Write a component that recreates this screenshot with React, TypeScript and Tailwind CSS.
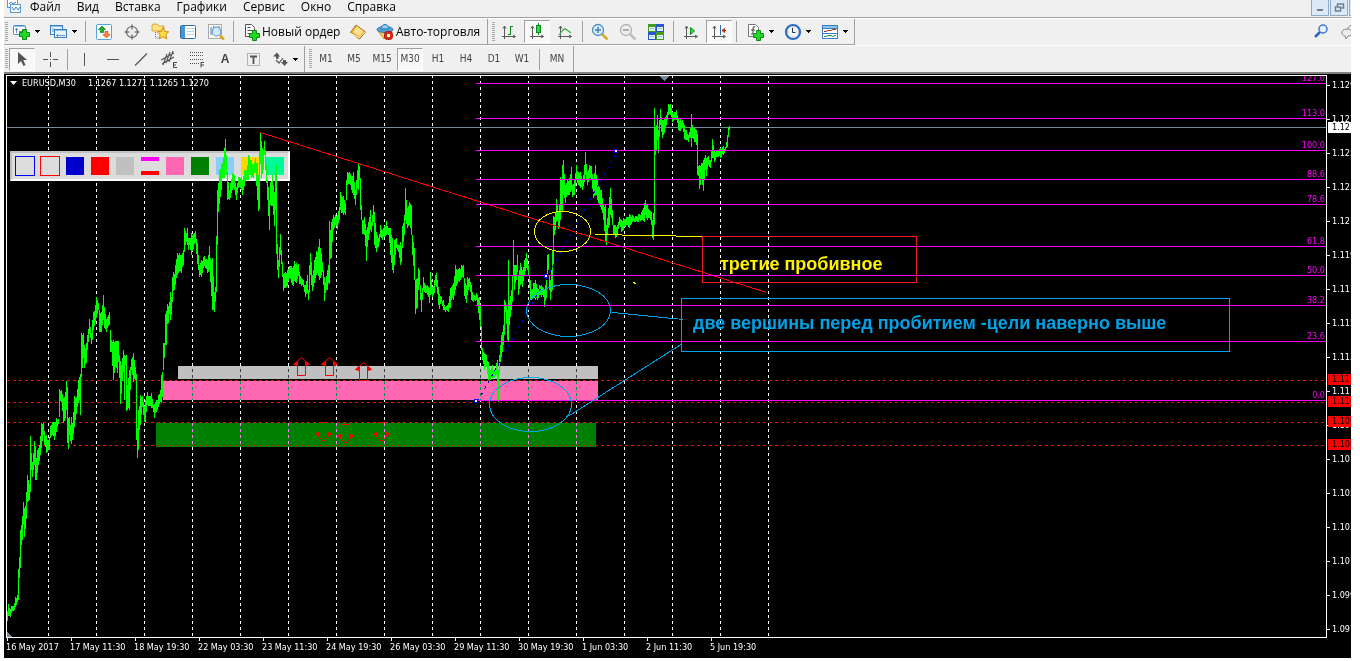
import React from 'react';

type IconProps = { children: React.ReactNode; w?: number };

const Icon: React.FC<IconProps> = ({ children, w = 18 }) => (
    <svg width={w} height="18" viewBox={`0 0 ${w} 18`} className="shrink-0" aria-hidden="true">
        {children}
    </svg>
);

const Caret: React.FC = () => (
    <svg width="5" height="3" viewBox="0 0 5 3" className="shrink-0" shapeRendering="crispEdges" aria-hidden="true">
        <path d="M0 0h5v1h-5zM1 1h3v1h-3zM2 2h1v1h-1z" fill="#000" />
    </svg>
);

const Plus: React.FC<{ x: number; y: number }> = ({ x, y }) => (
    <path
        transform={`translate(${x} ${y})`}
        d="M3.500 .5h4v3h3v4h-3v3h-4v-3h-3v-4h3z"
        fill="#22d822"
        stroke="#0a8a14"
    />
);

const Axes: React.FC = () => (
    <path d="M4.500 3v13M2 13.500h13M3 5.500l1.500-2.500 1.500 2.500M13 12l2.500 1.500-2.500 1.500" fill="none" stroke="#5a5a5a" />
);

const icons: Record<string, React.ReactNode> = {
    newChart: (
        <Icon>
            <rect x=".5" y="2.500" width="12" height="9" rx="1" fill="#fff" stroke="#4a8cc8" />
            <path d="M1 3.500h11" stroke="#8fc0ea" />
            <path d="M3.500 5v5M2 6.500h3M6 8.500h4" stroke="#5f88a8" fill="none" />
            <Plus x={6} y={6} />
        </Icon>
    ),
    profiles: (
        <Icon>
            <rect x=".5" y="2.500" width="12" height="9" fill="#e8f3fc" stroke="#3a7ebf" />
            <path d="M1 3.500h11" stroke="#8fc0ea" />
            <rect x="4.500" y="6.500" width="12" height="8" fill="#e8f3fc" stroke="#3a7ebf" />
            <path d="M5 7.500h11" stroke="#8fc0ea" />
            <path d="M6 12.500h9M7.500 11v3M3 5v4" stroke="#6f98bc" />
        </Icon>
    ),
    market: (
        <Icon>
            <rect x="1.500" y="1.500" width="15" height="15" rx="1" fill="#f6fafd" stroke="#55a4dc" />
            <path d="M7 3l3.500 3.500h-2v3h-3v-3h-2z" fill="#1cae2c" stroke="#0a7d12" strokeWidth=".7" />
            <path d="M11.500 15l3.500-3.500h-2v-3h-3v3h-2z" fill="#ff8a43" stroke="#d0420d" strokeWidth=".7" />
        </Icon>
    ),
    target: (
        <Icon>
            <circle cx="9" cy="9" r="5.500" fill="none" stroke="#666" strokeWidth="1.200" />
            <path d="M9 1.500v5M9 11.500v5M1.500 9h5M11.500 9h5" stroke="#555" strokeWidth="1.200" />
        </Icon>
    ),
    navigator: (
        <Icon>
            <path d="M1 8V2l1-1h4l2 2h5v5z" fill="#ffe083" stroke="#d9a83c" />
            <path d="M4.500 9v6h3" stroke="#777" strokeDasharray="1 1" fill="none" />
            <path d="M12 4.500l1.800 4 4 .3-3 2.900 1 4.300-3.800-2.300-3.800 2.300 1-4.300-3-2.900 4-.3z" fill="#ffdc40" stroke="#cf8c11" />
        </Icon>
    ),
    terminal: (
        <Icon>
            <rect x="1.500" y="2.500" width="15" height="13" rx="1" fill="#fff" stroke="#2e6ca8" />
            <rect x="2" y="3" width="4" height="12" fill="#4a94d4" />
            <path d="M8 5.500h7M8 8.500h7M8 11.500h7" stroke="#b9d1e8" />
        </Icon>
    ),
    tester: (
        <Icon>
            <rect x="1.500" y="1.500" width="13" height="14" fill="#f7f7f7" stroke="#aaa" />
            <path d="M4 4v8M6.500 3v6M12 3v6" stroke="#5b88b0" />
            <circle cx="9.500" cy="8.500" r="4.500" fill="#cbe6f9" fillOpacity=".8" stroke="#5a98cc" strokeWidth="1.200" />
            <path d="M13 12.500l4 4" stroke="#d9a520" strokeWidth="2.500" />
        </Icon>
    ),
    order: (
        <Icon>
            <path d="M2.500 1.500h6l3 3v9h-9z" fill="#fff" stroke="#555" />
            <path d="M4.500 4.500h3M4.500 7.500h5M4.500 10.500h4" stroke="#555" />
            <Plus x={6} y={7} />
        </Icon>
    ),
    book: (
        <Icon>
            <path d="M1.500 9.500L7 2l9.500 7-6 7z" fill="#e9b138" stroke="#a86d0c" />
            <path d="M4 9l4-5.500 6.500 4.700-4.500 4.800z" fill="#ffe391" />
            <path d="M2 10.500l8 4 6-5.500" fill="none" stroke="#fff1c4" />
        </Icon>
    ),
    auto: (
        <Icon>
            <path d="M2 8l6 8 8-6-1-4z" fill="#f8cf52" stroke="#c89520" />
            <ellipse cx="9" cy="6.500" rx="8" ry="3" fill="#4fa3da" stroke="#2a75ac" />
            <path d="M5 6c0-6 8-6 8 0z" fill="#8bcdf2" stroke="#2a75ac" />
            <rect x="8.500" y="8.500" width="8" height="8" rx="3" fill="#dc2d16" stroke="#a31208" />
            <rect x="11" y="11" width="3" height="3" fill="#fff" />
        </Icon>
    ),
    bars: (
        <Icon>
            <Axes />
            <path d="M10.500 3v9M8 11.500h3M10 3.500h3" stroke="#0a8a1a" />
        </Icon>
    ),
    candles: (
        <Icon>
            <Axes />
            <path d="M10.500 0v12" stroke="#0a8a1a" />
            <rect x="8.500" y="2.500" width="4" height="7" fill="#32d840" stroke="#0a8a1a" />
        </Icon>
    ),
    line: (
        <Icon>
            <Axes />
            <path d="M3 12l4-5q2-2 4 0l4 3" fill="none" stroke="#3fac4a" strokeWidth="1.200" />
        </Icon>
    ),
    zoomIn: (
        <Icon>
            <path d="M11 11l5.500 5.500" stroke="#d9ac2e" strokeWidth="2.700" />
            <circle cx="7" cy="7" r="5.500" fill="#d9effc" stroke="#4a8cc8" strokeWidth="1.300" />
            <path d="M4 7h6M7 4v6" stroke="#3f7cb5" strokeWidth="1.500" />
        </Icon>
    ),
    zoomOut: (
        <Icon>
            <path d="M11 11l5.500 5.500" stroke="#c0c0c0" strokeWidth="2.700" />
            <circle cx="7" cy="7" r="5.500" fill="#eee" stroke="#b0b0b0" strokeWidth="1.300" />
            <path d="M4 7h6" stroke="#999" strokeWidth="1.500" />
        </Icon>
    ),
    tile: (
        <Icon>
            <path d="M1 1h8v8h-8zM9 9h8v8h-8z" fill="#3f9d1f" />
            <path d="M9 1h8v8h-8zM1 9h8v8h-8z" fill="#2458cc" />
            <path d="M2 4h6v4h-6zM10 4h6v4h-6zM2 12h6v4h-6zM10 12h6v4h-6z" fill="#e3eefa" />
            <path d="M3 5.500h4M11 5.500h4M3 13.500h4M11 13.500h4" stroke="#9fc0e0" />
        </Icon>
    ),
    scroll: (
        <Icon>
            <Axes />
            <path d="M8.500 4.500l4 3.500-4 3.500z" fill="#3bd34a" stroke="#0a8a1a" />
        </Icon>
    ),
    shift: (
        <Icon>
            <Axes />
            <path d="M10.500 2v10" stroke="#2c6fb0" />
            <path d="M16 7.500h-3M14.500 5.500l-2.500 2 2.500 2z" stroke="#b3330e" fill="#b3330e" />
        </Icon>
    ),
    indicator: (
        <Icon>
            <path d="M1.500 1.500h7l3 3v9h-10z" fill="#fff" stroke="#777" />
            <path d="M8 4q-2-1-2 1v5q0 2-2 1M4 7h4" fill="none" stroke="#444" />
            <Plus x={6} y={7} />
        </Icon>
    ),
    clock: (
        <Icon>
            <circle cx="9" cy="9" r="7" fill="#eef5fc" stroke="#2a6cc4" strokeWidth="2.200" />
            <path d="M8.500 5v4.500h3" stroke="#333" fill="none" />
            <path d="M9 3.500v1M9 13.500v1M3.500 9h1M13.500 9h1" stroke="#888" />
        </Icon>
    ),
    template: (
        <Icon>
            <rect x="1.500" y="2.500" width="15" height="13" fill="#fff" stroke="#3a7ebf" />
            <path d="M2 4h14" stroke="#8cc4f0" strokeWidth="2" />
            <path d="M2 5.500h14M2 10.500h14" stroke="#3a7ebf" />
            <path d="M3 8.500h2l2-1h3l2-1h3" stroke="#a33316" fill="none" />
            <path d="M3 13.500h2l2-1h3l2 1 2-1h1" stroke="#2c8a35" fill="none" />
        </Icon>
    ),
    cursor: (
        <Icon>
            <path d="M5 2v12l3-3 2.500 5 2-1-2.300-5h4z" fill="#555" />
        </Icon>
    ),
    cross: (
        <Icon>
            <path d="M9.500 2v5M9.500 12v5M2 9.500h5M12 9.500h5M9 9.500h1" stroke="#555" />
        </Icon>
    ),
    vline: <Icon><path d="M8.500 3v13" stroke="#555" /></Icon>,
    hline: <Icon><path d="M3 9.500h12" stroke="#555" /></Icon>,
    trend: <Icon><path d="M3 15.500L15 3.500" stroke="#555" strokeWidth="1.200" /></Icon>,
    channel: (
        <Icon>
            <path d="M1 10L14 3M2 14L14 7M3 15L7 4M6 13L10 2M9 12L13 1" stroke="#555" strokeWidth="1.200" />
            <path d="M17 12.500h-3.500v5h3.500M13 15h3" stroke="#444" fill="none" />
        </Icon>
    ),
    fibo: (
        <Icon>
            <path d="M2 2.500h14M2 5.500h14M2 9.500h14M2 13.500h9" stroke="#555" strokeDasharray="1 1" />
            <path d="M16 12.500h-3v5M13 15h3" stroke="#444" fill="none" />
        </Icon>
    ),
    label: (
        <Icon>
            <rect x="3.500" y="3.500" width="12" height="12" fill="none" stroke="#777" strokeDasharray="1 1" />
            <path d="M6 6.500h7M9.500 6v8" stroke="#555" strokeWidth="1.800" />
        </Icon>
    ),
    arrows: (
        <Icon>
            <path d="M2 6.500l4-4 3 4zM4.500 6h3v3h-2zM10 12h7l-3.500 4zM12 10h3v3h-3z" fill="#555" />
            <path d="M5 10l3 3 4-5" stroke="#555" fill="none" strokeWidth="1.200" />
        </Icon>
    ),
};

const Grip: React.FC = () => (
    <div className="ml-px w-[3px] h-5 shrink-0 bg-[repeating-linear-gradient(to_bottom,#a8a8a8_0px,#a8a8a8_1px,#f0f0f0_1px,#f0f0f0_2px)]"></div>
);

const Sep: React.FC = () => <div className="w-px h-[21px] mx-[3px] shrink-0 bg-[#a0a0a0]"></div>;

const Tool: React.FC<{ icon: string; name: string; pressed?: boolean }> = ({ icon, name, pressed }) => (
    <button
        aria-label={name}
        className={
            pressed
                ? 'flex items-center justify-center w-[26px] mx-px h-[23px] shrink-0 border border-t-[#a0a0a0] border-l-[#a0a0a0] border-r-white border-b-white bg-[#f8f8f8]'
                : 'flex items-center justify-center w-7 h-[23px] shrink-0'
        }
    >
        {icons[icon]}
    </button>
);

const DropTool: React.FC<{ icon: string; name: string }> = ({ icon, name }) => (
    <button aria-label={name} className="flex items-center gap-1 pl-[2px] w-[37px] h-[23px] shrink-0">
        {icons[icon]}
        <Caret />
    </button>
);

const menu = ['Файл', 'Вид', 'Вставка', 'Графики', 'Сервис', 'Окно', 'Справка'];
const frames = ['M1', 'M5', 'M15', 'M30', 'H1', 'H4', 'D1', 'W1'];

const dates = [
    '16 May 2017', '17 May 11:30', '18 May 19:30', '22 May 03:30', '23 May 11:30', '24 May 19:30',
    '26 May 03:30', '29 May 11:30', '30 May 19:30', '1 Jun 03:30', '2 Jun 11:30', '5 Jun 19:30',
];

const prices = [
    '1.129', '1.127', '1.125', '1.123', '1.121', '1.119', '1.117', '1.115', '1.113',
    '1.111', '1.109', '1.107', '1.105', '1.103', '1.101', '1.099', '1.097',
];

const fibs: [number, string][] = [
    [83, '127.0'], [118, '113.0'], [150, '100.0'], [179, '88.6'], [204, '78.6'],
    [246, '61.8'], [275, '50.0'], [305, '38.2'], [341, '23.6'], [400, '0.0'],
];

const levels = [380, 402, 422, 445];

// x, high, low
const quotes: number[][] = [
    [7,611,617],[8,611,621],[9,604,616],[11,609,617],[12,606,613],[15,603,610],[16,597,607],[18,595,602],[19,569,600],
    [20,557,578],[21,530,568],[22,525,545],[23,516,540],[24,502,525],[25,508,537],[26,506,529],[27,492,519],[28,475,502],
    [29,480,501],[30,484,500],[31,436,492],[32,453,470],[33,462,477],[35,441,465],[36,446,480],[37,458,480],[38,450,473],
    [40,445,461],[42,423,448],[44,423,435],[45,431,445],[46,436,447],[47,435,453],[48,440,452],[50,437,450],[51,426,438],
    [53,422,435],[55,422,440],[57,418,432],[59,419,424],[60,389,417],[61,391,401],[62,390,402],[64,398,423],[66,392,418],
    [67,381,410],[68,387,443],[69,418,449],[70,417,435],[71,425,441],[72,417,444],[73,423,440],[75,396,427],[77,397,414],
    [79,380,403],[80,377,400],[81,374,415],[82,333,377],[84,333,358],[85,345,368],[86,348,364],[87,343,363],[88,335,350],
    [90,319,334],[92,333,344],[93,320,340],[94,312,330],[96,305,322],[97,297,318],[98,300,314],[99,303,310],[100,310,332],
    [102,312,332],[104,295,320],[105,307,328],[107,319,332],[110,312,325],[111,330,352],[112,340,352],[114,340,380],
    [116,341,367],[118,341,373],[119,341,362],[120,355,378],[121,361,404],[122,365,394],[124,350,372],[125,355,400],
    [126,356,365],[127,355,411],[128,385,410],[130,370,410],[132,359,370],[134,353,382],[136,367,380],[137,374,440],
    [138,428,458],[139,410,450],[140,406,430],[141,395,425],[143,396,407],[144,402,415],[145,406,422],[146,400,422],
    [148,392,405],[150,396,406],[152,393,408],[154,405,412],[155,404,418],[157,400,412],[159,395,407],[161,390,402],
    [162,375,403],[163,372,397],[164,343,370],[165,343,358],[166,314,345],[167,311,345],[168,304,324],[169,306,323],
    [170,302,314],[171,292,320],[172,297,315],[173,277,302],[174,272,291],[175,274,290],[176,265,285],[178,253,275],
    [180,253,271],[182,255,273],[184,250,265],[185,228,252],[187,233,242],[188,228,245],[189,238,250],[190,238,245],
    [192,233,255],[194,234,249],[196,231,243],[198,243,264],[200,265,277],[202,260,277],[205,256,266],[208,260,273],
    [210,246,270],[211,258,282],[213,258,310],[215,292,312],[216,287,302],[217,236,292],[218,190,245],[219,183,212],
    [220,170,204],[222,164,190],[223,163,178],[225,148,178],[226,139,165],[227,155,175],[228,172,200],[230,190,200],
    [231,183,198],[233,173,190],[235,175,190],[237,187,200],[239,177,188],[242,177,190],[243,180,195],[245,170,186],
    [247,170,180],[249,155,180],[250,156,172],[252,160,178],[254,165,178],[256,158,172],[258,163,200],[259,175,211],
    [260,151,209],[261,133,164],[262,141,178],[264,150,170],[265,141,155],[266,150,170],[268,180,200],[269,187,216],
    [270,200,230],[271,182,205],[273,175,206],[275,192,226],[276,165,210],[277,165,254],[278,244,270],[279,260,278],
    [280,247,267],[281,234,255],[282,250,264],[283,262,277],[284,274,291],[286,272,288],[288,270,286],[290,266,278],
    [292,266,283],[294,266,286],[295,261,281],[297,263,283],[299,264,276],[300,272,284],[302,278,286],[304,280,287],
    [306,285,297],[308,275,293],[309,290,300],[310,265,292],[311,253,275],[312,262,285],[313,275,291],[315,260,283],
    [317,251,275],[318,252,273],[320,239,280],[321,248,278],[322,253,275],[323,262,272],[325,277,301],[326,282,293],
    [328,270,290],[329,265,283],[330,221,284],[331,230,259],[332,222,258],[334,215,230],[336,215,225],[338,215,229],
    [340,207,220],[341,192,210],[342,195,213],[344,196,215],[346,203,215],[347,180,200],[348,172,185],[350,172,184],
    [352,176,190],[354,172,195],[356,190,205],[357,180,195],[358,170,188],[359,163,190],[360,166,180],[361,178,210],
    [362,205,220],[363,220,234],[365,217,235],[367,230,261],[368,227,247],[369,222,240],[371,210,230],[372,222,232],
    [374,205,222],[375,212,245],[377,232,252],[379,238,247],[381,225,237],[383,230,240],[385,226,237],[387,221,235],
    [389,228,235],[391,228,255],[393,238,270],[394,255,273],[395,240,265],[397,238,248],[399,245,252],[401,242,265],
    [402,246,262],[403,226,248],[405,215,235],[406,188,220],[408,208,228],[410,202,225],[412,205,235],[413,235,255],
    [415,248,280],[416,280,314],[418,278,308],[419,268,290],[420,270,285],[421,285,300],[422,293,312],[423,288,300],
    [424,277,290],[426,285,293],[428,285,295],[430,288,303],[431,272,295],[433,287,297],[435,280,293],[436,275,285],
    [437,273,287],[439,287,305],[440,294,309],[442,297,302],[444,300,310],[446,307,312],[449,303,312],[451,288,308],
    [452,287,300],[454,283,300],[456,265,290],[458,270,284],[460,268,282],[462,265,278],[464,265,278],[465,278,296],
    [467,285,303],[468,277,295],[470,278,287],[472,285,300],[474,295,302],[477,293,300],[480,297,320],[481,305,327],
    [482,326,350],[483,348,360],[485,353,370],[487,355,367],[489,362,380],[491,370,380],[493,365,378],[495,370,378],
    [497,363,375],[498,360,400],[499,370,402],[500,355,373],[501,345,362],[502,335,358],[504,325,345],[505,300,335],
    [506,302,312],[508,310,340],[509,260,342],[510,300,325],[512,290,310],[513,275,302],[514,240,275],[515,265,290],
    [517,265,280],[518,255,272],[519,275,295],[521,263,285],[523,270,287],[525,260,275],[527,253,268],[529,265,275],
    [531,280,300],[532,290,300],[534,283,298],[536,280,300],[538,288,300],[540,285,295],[542,285,297],[544,288,297],
    [545,290,307],[547,280,298],[548,255,275],[549,254,270],[550,275,290],[551,280,300],[552,270,292],[553,250,290],
    [554,216,265],[555,217,235],[556,212,230],[557,199,222],[558,205,220],[559,212,229],[560,205,228],[561,177,220],
    [562,180,210],[563,165,212],[564,160,195],[566,185,203],[568,180,195],[570,178,195],[572,167,190],[573,185,197],
    [575,180,195],[577,165,180],[579,172,185],[581,172,188],[583,180,190],[585,165,182],[586,152,175],[588,172,185],
    [590,165,180],[592,166,180],[594,178,198],[596,165,195],[597,175,195],[598,180,200],[600,187,205],[602,190,210],
    [604,205,220],[606,205,242],[607,225,245],[608,218,235],[610,197,225],[611,188,215],[613,210,225],[614,225,235],
    [616,225,238],[618,225,235],[620,217,225],[622,220,232],[624,218,230],[627,217,225],[630,214,228],[633,215,222],
    [636,216,222],[639,214,222],[642,212,220],[645,203,222],[646,200,215],[648,205,220],[650,210,218],[652,212,225],
    [653,220,238],[654,213,240],[655,108,225],[656,127,155],[657,125,150],[658,115,140],[659,130,153],[661,109,125],
    [663,120,138],[665,118,133],[667,115,125],[669,104,115],[671,104,115],[673,112,122],[675,112,120],[677,110,120],
    [679,119,130],[681,119,131],[683,120,128],[685,125,139],[687,130,140],[689,135,142],[691,128,138],[692,114,147],
    [693,125,138],[695,128,142],[697,130,145],[698,134,175],[699,166,176],[700,165,189],[702,163,180],[704,160,191],
    [706,155,170],[707,158,176],[709,156,165],[711,160,168],[713,139,158],[715,150,162],[718,150,157],[721,148,158],
    [724,146,155],[726,147,150],[728,135,147],[729,127,137],[730,126,130],
];

// one vertical bar per pixel column, filling the columns between the known ones
const buildSeries = () => {
    let d = '';
    for (let i = 0; i < quotes.length; i++) {
        const [x, hi, lo] = quotes[i];
        const next = quotes[i + 1];
        d += `M${x} ${hi}V${lo}`;
        if (!next) continue;
        for (let k = x + 1; k < next[0]; k++) {
            const t = (k - x) / (next[0] - x);
            const j = ((k * 7) % 3) - 1;
            d += `M${k} ${Math.round(hi + (next[1] - hi) * t) + j + 1}V${Math.round(lo + (next[2] - lo) * t) + j - 1}`;
        }
    }
    return d;
};

const series = buildSeries();

const UpArrow: React.FC<{ x: number; y: number }> = ({ x, y }) => (
    <g transform={`translate(${x} ${y})`} stroke="#f00" shapeRendering="auto">
        <path d="M-4 7V18H4V7M-8 7L0 0L8 7" fill="none" />
        <path d="M-8 7L-4 4V8ZM8 7L4 4V8Z" fill="#f00" />
    </g>
);

const DownArrow: React.FC<{ x: number; y: number }> = ({ x, y }) => (
    <g transform={`translate(${x} ${y})`} stroke="#f00" shapeRendering="auto">
        <path d="M-4 11V0H4V11M-8 11L0 19L8 11" fill="none" />
        <path d="M-8 11L-4 15V10ZM8 11L4 15V10Z" fill="#f00" />
    </g>
);

const Palette: React.FC = () => (
    <div className="absolute left-[3px] top-[75px] flex gap-[7px] items-center w-[280px] h-[30px] pl-[3px] bg-[#dcdcdc] border-2 border-t-[#c0c0c0] border-l-[#c0c0c0] border-r-white border-b-white">
        <div className="size-5 -mr-[2px] border border-[#0000ff]"></div>
        <div className="size-5 -mr-px border border-[#ff0000]"></div>
        <div className="size-[18px] bg-[#0000cd]"></div>
        <div className="size-[18px] bg-[#ff0000]"></div>
        <div className="size-[18px] bg-[#c0c0c0]"></div>
        <div className="size-[18px] border-y-4 border-t-[#ff00ff] border-b-[#ff0000]"></div>
        <div className="size-[18px] bg-[#ff69b4]"></div>
        <div className="size-[18px] bg-[#008000]"></div>
        <div className="size-[18px] bg-[#87cefa]"></div>
        <div className="size-[18px] bg-[#ffd700]"></div>
        <div className="size-[18px] bg-[#00fa9a]"></div>
    </div>
);

const Plot: React.FC = () => (
    <div className="relative flex-1 min-w-0 border border-white overflow-hidden">
        <svg className="absolute inset-0 w-full h-full" shapeRendering="crispEdges">
            <rect width="100%" height="100%" fill="#000" />
            <g transform="translate(-6.5 -76)">
                {Array.from({ length: 16 }, (_, i) => (
                    <line key={i} x1={48 * (i + 1)} x2={48 * (i + 1)} y1="75" y2="120%" stroke="#fff" strokeDasharray="3 3" />
                ))}
            </g>
            <g className="mix-blend-difference" transform="translate(-7 -76)">
                <rect x="178" y="366" width="420" height="13" fill="#c0c0c0" />
                <rect x="163" y="381" width="435" height="19" fill="#ff69b4" />
                <rect x="156" y="423" width="440" height="24" fill="#008000" />
            </g>
        </svg>
        <Palette />
        <svg className="absolute inset-0 w-full h-full" shapeRendering="crispEdges">
            <g transform="translate(-7 -75.5)">
                {levels.map((y) => (
                    <line key={y} x1="7" x2="110%" y1={y} y2={y} stroke="#f00" strokeDasharray="3 3" />
                ))}
                <line x1="7" x2="110%" y1="127" y2="127" stroke="#778899" />
            </g>
            <g transform="translate(-7.5 -76)">
                <path d={series} stroke="#0f0" />
            </g>
            <g transform="translate(-6.5 -75.5)">
                <path d="M260 132L766 292" stroke="#f00" />
                <path d="M477 401L617 150" stroke="#0000cd" strokeDasharray="3 4" />
            </g>
            <g transform="translate(-7 -75.5)">
                {fibs.map(([y]) => (
                    <line key={y} x1="476" x2="110%" y1={y} y2={y} stroke="#f0f" />
                ))}
            </g>
            <g transform="translate(-7.5 -75.5)">
                <path d="M475 399h3v3h-3zM545 274h3v3h-3zM615 149h3v3h-3z" fill="#fff" stroke="#00f" />
                <UpArrow x={302} y={357} />
                <UpArrow x={330} y={357} />
                <UpArrow x={364} y={362} />
                <DownArrow x={324} y={422} />
                <DownArrow x={346} y={424} />
                <DownArrow x={382} y={422} />
                <path d="M661 76h8l-4 4zM8 632l5 5h-5z" fill="#778899" stroke="#778899" />
                <ellipse cx="563" cy="231" rx="28" ry="20" fill="none" stroke="#fff200" />
                <ellipse cx="569" cy="310" rx="42" ry="26" fill="none" stroke="#00a2e8" />
                <ellipse cx="531" cy="404" rx="41" ry="27" fill="none" stroke="#00a2e8" />
                <path d="M595 234h27M622 235h54M676 236h27M633 282h2M634 283h2" stroke="#fff200" />
                <path d="M613 312L684 319M570 415L683 343" stroke="#00a2e8" />
            </g>
        </svg>
        <svg className="absolute right-0 top-0 w-12 h-full text-[9px]" fill="#f0f">
            {fibs.map(([y, t]) => (
                <text key={t} x="47" y={y - 78} textAnchor="end">{t}</text>
            ))}
        </svg>
        <div className="absolute left-[3px] top-px flex items-center h-3 text-[9px] whitespace-pre text-white">
            <svg width="7" height="4" viewBox="0 0 7 4" className="mr-[5px]" aria-hidden="true"><path d="M0 0h7L3.500 4z" fill="#fff" /></svg>
            <span className="w-[66px]">EURUSD,M30</span>
            <span>1.1267 1.1271 1.1265 1.1270</span>
        </div>
        <div className="absolute left-[695px] top-[160px] flex items-center w-[215px] h-[47px] pl-[17px] pt-2 border border-[#ed1c24] font-['Liberation_Sans'] font-bold text-[18px] whitespace-nowrap text-[#fff200]">
            третие пробивное
        </div>
        <div className="absolute left-[674px] top-[222px] flex items-center w-[549px] h-[54px] pl-[11px] pb-1 border border-[#00a2e8] font-['Liberation_Sans'] font-bold text-[18px] whitespace-nowrap text-[#00a2e8]">
            две вершины перед пробитием -цели наверно выше
        </div>
    </div>
);

const PriceAxis: React.FC = () => (
    <div className="relative w-6 shrink-0 overflow-hidden">
        <ul className="absolute left-0 -top-[7px]">
            {prices.map((p) => (
                <li key={p} className="flex items-center gap-[2px] h-[34px]">
                    <span className="w-[3px] h-px shrink-0 bg-white"></span>
                    <span>{p}</span>
                </li>
            ))}
        </ul>
        <div className="absolute left-px top-[47px] w-8 h-[11px] pl-1 leading-[11px] bg-white text-black">1.127</div>
        <div className="absolute left-px top-[299px] w-8 h-[11px] pl-1 leading-[11px] bg-[#ff0000] text-black">1.111</div>
        <div className="absolute left-px top-[321px] w-8 h-[11px] pl-1 leading-[11px] bg-[#ff0000] text-black">1.110</div>
        <div className="absolute left-px top-[341px] w-8 h-[11px] pl-1 leading-[11px] bg-[#ff0000] text-black">1.109</div>
        <div className="absolute left-px top-[364px] w-8 h-[11px] pl-1 leading-[11px] bg-[#ff0000] text-black">1.108</div>
    </div>
);

const App: React.FC = () =>
{
    return (
        <div className="flex flex-col min-h-screen bg-white pl-1 pr-[9px] pb-[3px] overflow-hidden font-['Open_Sans',sans-serif] text-xs text-black">
            <div className="flex flex-col bg-[#f0f0f0]">
                <nav className="flex h-[18px] pl-[3px] border-b border-[#a0a0a0] leading-[14px]">
                    <svg width="15" height="15" viewBox="0 0 15 15" className="shrink-0 -mt-px" aria-hidden="true">
                        <rect x=".5" y=".5" width="10" height="8" fill="#fff" stroke="#5b9bd5" />
                        <path d="M2 5l2-2 2 2 3-2" fill="none" stroke="#3a7ebf" />
                        <rect x="3.500" y="5.500" width="10" height="8" fill="#fff" stroke="#5b9bd5" />
                        <path d="M5 8l2 3 2-3 2 3 2-3" fill="none" stroke="#3a7ebf" />
                    </svg>
                    <div className="flex items-start gap-4 pl-2">
                        {menu.map((m) => (
                            <button key={m}>{m}</button>
                        ))}
                    </div>
                    <div className="flex gap-px ml-auto">
                        <button aria-label="Свернуть" className="w-[18px] h-4 border border-t-0 border-[#8ea9c4] bg-[#dce9f5]">
                            <svg width="16" height="15" aria-hidden="true"><path d="M5 10h6" stroke="#6b7f93" strokeWidth="2" /></svg>
                        </button>
                        <button aria-label="Восстановить" className="w-[18px] h-4 border border-t-0 border-[#8ea9c4] bg-[#dce9f5]">
                            <svg width="16" height="15" aria-hidden="true"><path d="M6.500 6V4h6v4h-2M4.500 7h5v4h-5z" fill="none" stroke="#6b7f93" strokeWidth="1.500" /></svg>
                        </button>
                        <span className="w-[2px] h-4 border-l border-b border-[#8ea9c4] bg-[#dce9f5]"></span>
                    </div>
                </nav>

                <div className="flex h-[27px] border-t border-white">
                    <div className="flex items-center w-[484px] shrink-0 border-r border-b border-[#a0a0a0]">
                        <Grip />
                        <div className="flex pl-[3px]">
                            <DropTool icon="newChart" name="Новый график" />
                            <DropTool icon="profiles" name="Профили" />
                        </div>
                        <div className="w-px h-[21px] mr-1 shrink-0 bg-[#a0a0a0]"></div>
                        <Tool icon="market" name="Обзор рынка" />
                        <Tool icon="target" name="Окно данных" />
                        <Tool icon="navigator" name="Навигатор" />
                        <Tool icon="terminal" name="Терминал" />
                        <Tool icon="tester" name="Тестер стратегий" />
                        <Sep />
                        <button className="flex items-center gap-px w-[107px] pl-[6px] shrink-0 whitespace-nowrap">
                            {icons.order}
                            <span>Новый ордер</span>
                        </button>
                        <Tool icon="book" name="MetaEditor" />
                        <button className="flex items-center gap-[2px] pl-1 shrink-0 whitespace-nowrap">
                            {icons.auto}
                            <span>Авто-торговля</span>
                        </button>
                    </div>
                    <div className="flex items-center w-[367px] pl-[3px] shrink-0 border-r border-b border-[#a0a0a0]">
                        <Grip />
                        <Tool icon="bars" name="Бары" />
                        <Tool icon="candles" name="Свечи" pressed />
                        <Tool icon="line" name="Линия" />
                        <Sep />
                        <Tool icon="zoomIn" name="Увеличить" />
                        <Tool icon="zoomOut" name="Уменьшить" />
                        <Tool icon="tile" name="Окна мозаикой" />
                        <Sep />
                        <Tool icon="scroll" name="Автопрокрутка" />
                        <Tool icon="shift" name="Сдвиг графика" pressed />
                        <Sep />
                        <div className="flex pl-[5px]">
                            <DropTool icon="indicator" name="Индикаторы" />
                            <DropTool icon="clock" name="Периоды" />
                            <DropTool icon="template" name="Шаблоны" />
                        </div>
                    </div>
                    <div className="flex items-center gap-[13px] ml-auto overflow-hidden w-[37px]">
                        <button aria-label="Поиск" className="shrink-0">
                            <svg width="14" height="16" viewBox="0 0 14 16" aria-hidden="true">
                                <path d="M1 13l5-5" stroke="#2e63c8" strokeWidth="2.500" />
                                <circle cx="9" cy="5" r="4" fill="#e8f2ff" stroke="#3c74d6" strokeWidth="1.500" />
                            </svg>
                        </button>
                        <button aria-label="Чат" className="shrink-0">
                            <svg width="18" height="16" viewBox="0 0 18 16" aria-hidden="true">
                                <ellipse cx="12" cy="5" rx="5" ry="4" fill="#eee" stroke="#888" />
                                <path d="M6 5c-6 0-7 6-2 7l1 3 2-3c6 0 6-7-1-7z" fill="#ececec" stroke="#888" />
                            </svg>
                        </button>
                    </div>
                </div>

                <div className="flex h-[27px] border-t border-white text-[#444]">
                    <div className="flex items-center w-[301px] shrink-0 border-r border-[#a0a0a0]">
                        <Grip />
                        <Tool icon="cursor" name="Курсор" pressed />
                        <Tool icon="cross" name="Перекрестие" />
                        <Sep />
                        <Tool icon="vline" name="Вертикальная линия" />
                        <Tool icon="hline" name="Горизонтальная линия" />
                        <Tool icon="trend" name="Трендовая линия" />
                        <Tool icon="channel" name="Канал" />
                        <Tool icon="fibo" name="Фибоначчи" />
                        <button className="w-7 shrink-0 font-['Liberation_Sans'] font-bold">A</button>
                        <Tool icon="label" name="Метка" />
                        <div className="flex pl-[2px]">
                            <DropTool icon="arrows" name="Стрелки" />
                        </div>
                    </div>
                    <div className="flex items-center w-[269px] pl-[3px] shrink-0 border-r border-[#a0a0a0] font-['DejaVu_Sans_Condensed','DejaVu_Sans'] text-[10px]">
                        <Grip />
                        {frames.map((f) => (
                            <button
                                key={f}
                                className={
                                    f === 'M30'
                                        ? 'w-[26px] mx-px h-[23px] shrink-0 border border-t-[#a0a0a0] border-l-[#a0a0a0] border-r-white border-b-white bg-[#f8f8f8]'
                                        : 'w-7 h-[23px] shrink-0'
                                }
                            >
                                {f}
                            </button>
                        ))}
                        <Sep />
                        <button className="w-7 h-[23px] shrink-0">MN</button>
                    </div>
                </div>
                <div className="h-[2px] bg-[#808080]"></div>
            </div>

            <div className="flex flex-col flex-1 bg-black pl-[2px] pt-[1px] text-white text-[9px] font-['DejaVu_Sans_Condensed','DejaVu_Sans']">
                <div className="flex flex-1">
                    <Plot />
                    <PriceAxis />
                </div>
                <div className="flex h-5 overflow-hidden">
                    {dates.map((d) => (
                        <div key={d} className="w-16 shrink-0 whitespace-nowrap">
                            <div className="ml-px w-px h-[3px] bg-white"></div>
                            <div className="leading-[12px]">{d}</div>
                        </div>
                    ))}
                </div>
            </div>
        </div>
    )
}

export default App;
